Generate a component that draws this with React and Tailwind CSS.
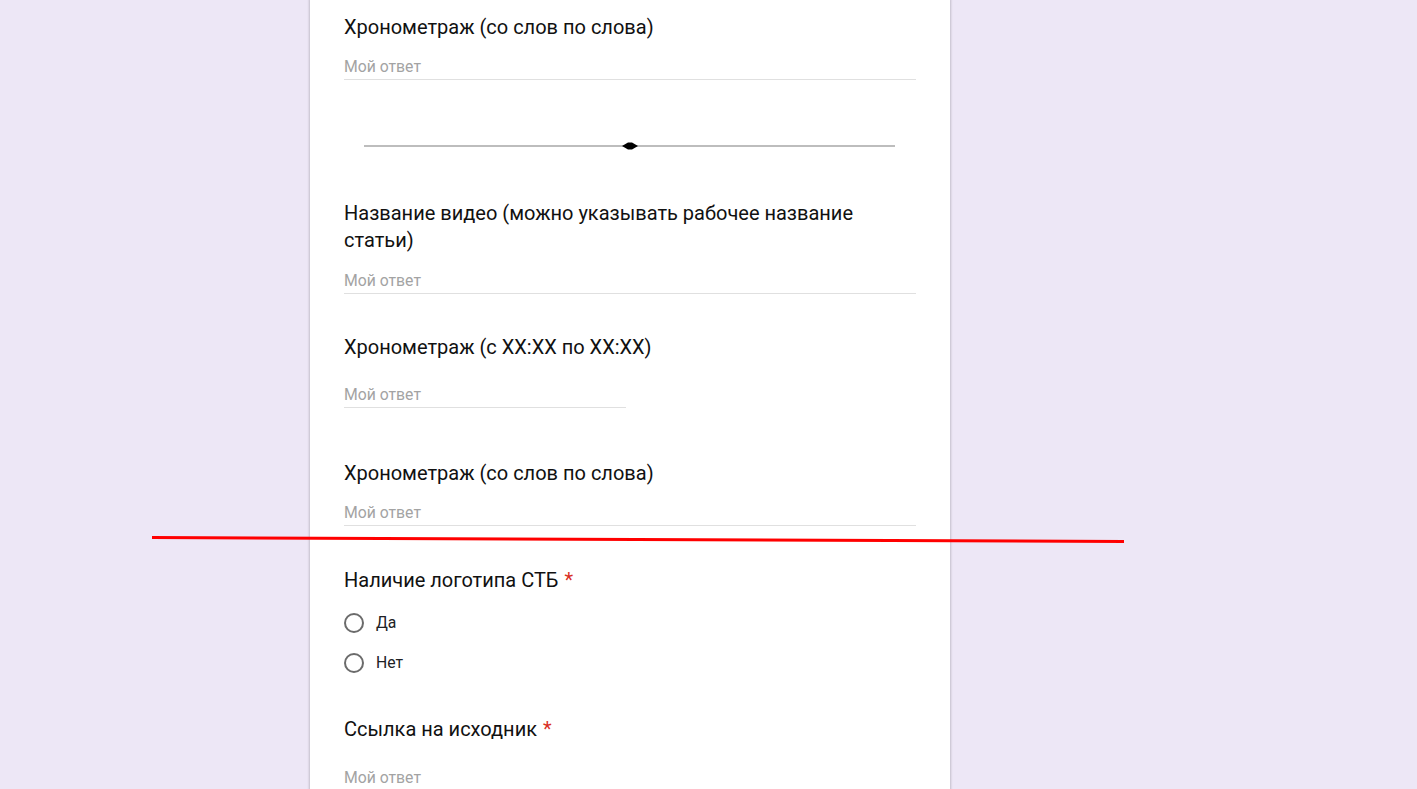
const font = { fontFamily: 'Roboto, "Noto Sans", sans-serif' };

const Title = ({ children, required }) => (
  <div className="text-[20px] leading-[27px] text-[#111111]">
    {children}
    {required && <span className="text-[#d93025] ml-[6px]">*</span>}
  </div>
);

const Answer = ({ className = 'w-full', mt = 'mt-[15px]' }) => (
  <div className={`${mt} ${className} border-b border-[#e0e0e0] pt-[1px] pb-[2px]`}>
    <div className="text-[15.75px] leading-[20px] text-[#a3a3a3]">Мой ответ</div>
  </div>
);

const Radio = ({ label }) => (
  <div className="flex items-center h-[40px]">
    <div className="w-[20px] h-[20px] rounded-full border-2 border-[#6b6b6b]" />
    <span className="ml-[12px] text-[15.75px] text-[#202124]">{label}</span>
  </div>
);

export default function App() {
  return (
    <div className="relative h-[789px] overflow-hidden bg-[#ede7f6]" style={font}>
      <div className="ml-[310px] w-[640px] min-h-full bg-white px-[34px] shadow-[0_0_2px_1px_rgba(0,0,0,0.18)]">
        <div className="pt-[14px]">
          <Title>Хронометраж (со слов по слова)</Title>
          <Answer />
        </div>

        <div className="mt-[56px] h-[20px] relative">
          <div className="absolute left-[20px] right-[21px] top-[9px] h-[2px] bg-[#bdbdbd]" />
          <div className="absolute left-[278px] top-[6px] w-[16px] h-[8px]">
            <svg width="16" height="8" viewBox="0 0 16 8">
              <path d="M0 4 L6 0.5 L10 0.5 L16 4 L10 7.5 L6 7.5 Z" fill="#000" />
            </svg>
          </div>
        </div>

        <div className="mt-[44px]">
          <Title>Название видео (можно указывать рабочее название<br />статьи)</Title>
          <Answer mt="mt-[16px]" />
        </div>

        <div className="mt-[40px]">
          <Title>Хронометраж (с XX:XX по XX:XX)</Title>
          <Answer className="w-[282px]" mt="mt-[23px]" />
        </div>

        <div className="mt-[52px]">
          <Title>Хронометраж (со слов по слова)</Title>
          <Answer />
        </div>

        <div className="mt-[41px]">
          <Title required>Наличие логотипа СТБ</Title>
          <div className="mt-[9px]">
            <Radio label="Да" />
            <Radio label="Нет" />
          </div>
        </div>

        <div className="mt-[33px]">
          <Title required>Ссылка на исходник</Title>
          <Answer mt="mt-[24px]" />
        </div>
      </div>

      <svg className="absolute inset-0 pointer-events-none" width="1417" height="789">
        <line x1="152" y1="537.5" x2="1124" y2="541.5" stroke="#ff0000" strokeWidth="3" />
      </svg>
    </div>
  );
}
